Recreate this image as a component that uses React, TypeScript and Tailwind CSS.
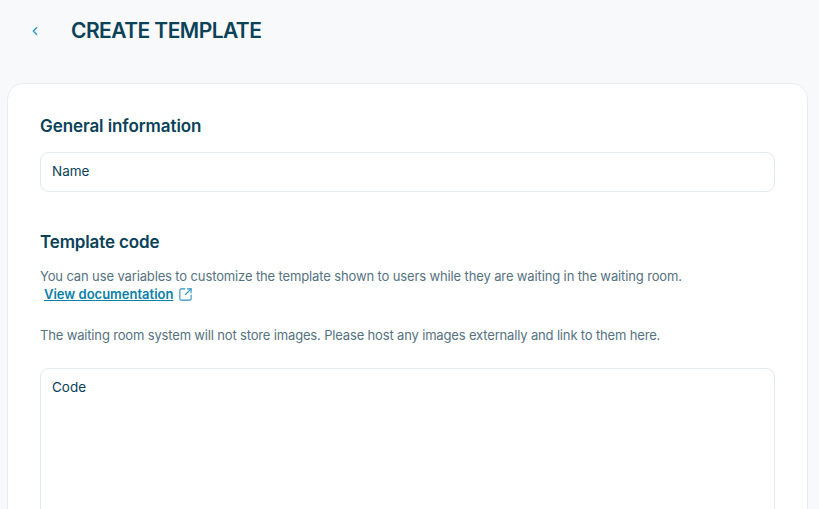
import React from 'react';
import { ChevronLeft, SquareArrowOutUpRight } from 'lucide-react';

const FONT = 'font-["Inter","Liberation_Sans",sans-serif]';

export default function App() {
    return (
        <div className={`${FONT} h-screen overflow-hidden bg-[#f8f9fb] text-[#0a4258]`}>
            {/* Header */}
            <div className="flex h-[83px] items-start pl-[28px] pt-[18px]">
                <div className="flex h-[26px] w-[44px] items-center">
                    <ChevronLeft className="h-[14px] w-[14px] text-[#1f93c2]" strokeWidth={2} />
                </div>
                <h1 className="-ml-px text-[21px] leading-[26px] font-semibold tracking-[-0.55px]">CREATE TEMPLATE</h1>
            </div>

            {/* Card */}
            <div className="ml-[7px] h-[600px] w-[801px] rounded-t-[16px] border border-[#e9edf0] bg-white px-[32px] pt-[31px]">
                <h2 className="text-[17px] leading-[22px] font-semibold tracking-[-0.08px]">General information</h2>
                <input
                    placeholder="Name"
                    className="mt-[15px] block h-[40px] w-[735px] rounded-[9px] border border-[#e5eaec] px-[11px] pb-[2px] text-[13.5px] outline-none placeholder:text-[#0a4258]"
                />

                <h2 className="mt-[39px] text-[17px] leading-[22px] font-semibold tracking-[-0.14px]">Template code</h2>
                <p className="mt-[14px] text-[13px] leading-[18px] tracking-[-0.13px] text-[#55727f]">
                    You can use variables to customize the template shown to users while they are waiting in the waiting room.
                </p>
                <div className="flex h-[18px] items-center pl-[4px]">
                    <a href="#" className="text-[13px] leading-[18px] font-semibold tracking-[0px] text-[#0a7fa8] underline">View documentation</a>
                    <SquareArrowOutUpRight className="ml-[5px] h-[15px] w-[15px] text-[#2a93bf]" strokeWidth={1.75} />
                </div>
                <p className="mt-[23px] text-[13px] leading-[18px] tracking-[-0.16px] text-[#55727f]">
                    The waiting room system will not store images. Please host any images externally and link to them here.
                </p>
                <textarea
                    placeholder="Code"
                    className="mt-[24px] block h-[200px] w-[735px] resize-none rounded-[9px] border border-[#e5eaec] px-[11px] py-[9px] text-[13.5px] leading-[18px] outline-none placeholder:text-[#0a4258]"
                />
            </div>
        </div>
    );
}
